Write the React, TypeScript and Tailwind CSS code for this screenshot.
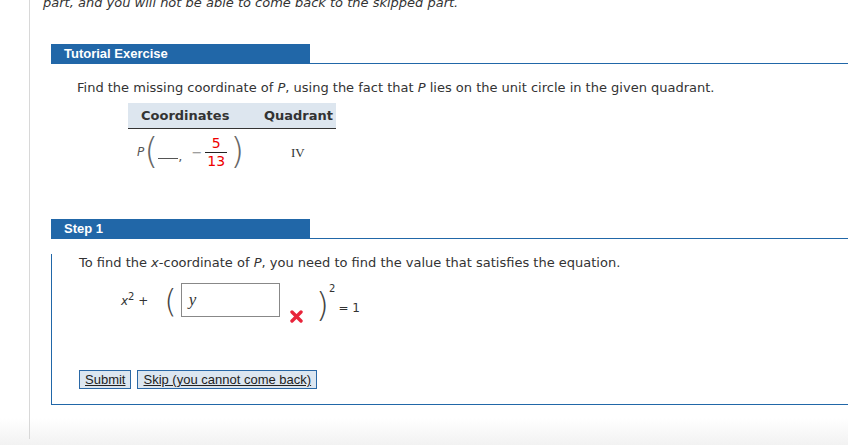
import React from "react";

const blue = "bg-[#2167a8]";

function SectionBar({ title }: { title: string }) {
  return (
    <div className="flex items-end">
      <div className={`${blue} h-[20px] w-[259px] pl-[13px] text-[13px] font-bold leading-[20px] text-white`} style={{ fontFamily: "Arial, 'Liberation Sans', sans-serif" }}>
        {title}
      </div>
      <div className="flex-1 border-b border-[#2167a8]" />
    </div>
  );
}

function Fraction() {
  return (
    <span className="mx-[3px] inline-flex flex-col items-center align-middle text-[14px] leading-[16px] text-[#e00]">
      <span className="px-[3px] pb-[1px]">5</span>
      <span className="border-t border-[#222] px-[2px]">13</span>
    </span>
  );
}

export default function App() {
  return (
    <div className="relative h-[445px] w-[848px] overflow-hidden bg-gradient-to-b from-white from-[94%] to-[#f2f2f2] text-[#333]" style={{ fontFamily: "Verdana, 'DejaVu Sans', sans-serif" }}>
      <div className="ml-[29px] h-full border-l border-[#d8d8d8]">
        <p className="-mt-[6px] pl-[13px] text-[13px] italic leading-[18px] text-[#333]">
          part, and you will not be able to come back to the skipped part.
        </p>

        <div className="ml-[21px] mt-[32px]">
          <SectionBar title="Tutorial Exercise" />
          <p className="mt-[15px] pl-[26px] text-[13px] leading-[18px]">
            Find the missing coordinate of <i>P</i>, using the fact that <i>P</i> lies on the unit circle in the given quadrant.
          </p>

          <table className="ml-[77px] mt-[6px] border-collapse text-[13px]">
            <thead>
              <tr className="h-[25px] border-b border-[#333] bg-[#dde6ef]">
                <th className="w-[124px] pl-[13px] text-left font-bold">Coordinates</th>
                <th className="w-[84px] pr-[3px] text-right font-bold">Quadrant</th>
              </tr>
            </thead>
            <tbody>
              <tr className="h-[48px]">
                <td className="pl-[9px]">
                  <span className="inline-flex items-center">
                    <i className="text-[12px] text-[#555]">P</i>
                    <span className="-mt-[3px] text-[36px] font-thin leading-none text-[#666]">(</span>
                    <span className="mt-[12px] inline-block w-[20px] border-b border-[#555]" />
                    <span className="mt-[8px] text-[#555]">,</span>
                    <span className="ml-[9px] text-[#888]">−</span>
                    <Fraction />
                    <span className="-mt-[3px] text-[36px] font-thin leading-none text-[#666]">)</span>
                  </span>
                </td>
                <td className="pl-[39px] text-[13px]" style={{ fontFamily: "'Times New Roman', 'Liberation Serif', serif" }}>
                  IV
                </td>
              </tr>
            </tbody>
          </table>
        </div>

        <div className="ml-[21px] mt-[43px]">
          <SectionBar title="Step 1" />
          <div className="border-b border-l border-[#2167a8] pb-[15px] pl-[27px]">
            <p className="mt-[15px] text-[13px] leading-[18px]">
              To find the <i>x</i>-coordinate of <i>P</i>, you need to find the value that satisfies the equation.
            </p>

            <div className="ml-[42px] mt-[11px] flex items-start text-[13px]">
              <span className="mt-[9px] text-[12px]">
                <i>x</i>
                <span className="relative -top-[5px] text-[10px]">2</span> +
              </span>
              <span className="ml-[16px] mt-[2px] text-[32px] font-thin leading-none text-[#444]">(</span>
              <div className="ml-[4px] flex h-[34px] w-[99px] items-center border border-[#888] pl-[7px] text-[17px] italic" style={{ fontFamily: "'Times New Roman', 'Liberation Serif', serif" }}>
                y
              </div>
              <svg className="ml-[10px] mt-[27px]" width="13" height="13" viewBox="0 0 13 13">
                <path d="M2 2 L11 11 M11 2 L2 11" stroke="#e8243a" strokeWidth="3.4" strokeLinecap="round" />
              </svg>
              <span className="ml-[13px] mt-[5px] text-[34px] font-thin leading-none text-[#444]">)</span>
              <span className="-mt-[2px] text-[10px]">2</span>
              <span className="ml-[3px] mt-[16px] text-[12px]">= 1</span>
            </div>

            <div className="mt-[47px] flex gap-[6px] text-[13px]" style={{ fontFamily: "Arial, 'Liberation Sans', sans-serif" }}>
              <button className="h-[19px] border border-[#2a68a6] bg-[#dce6f0] px-[5px] leading-[17px] text-[#222] underline">Submit</button>
              <button className="h-[19px] border border-[#2a68a6] bg-[#dce6f0] px-[5px] leading-[17px] text-[#222] underline">Skip (you cannot come back)</button>
            </div>
          </div>
        </div>
      </div>
    </div>
  );
}
